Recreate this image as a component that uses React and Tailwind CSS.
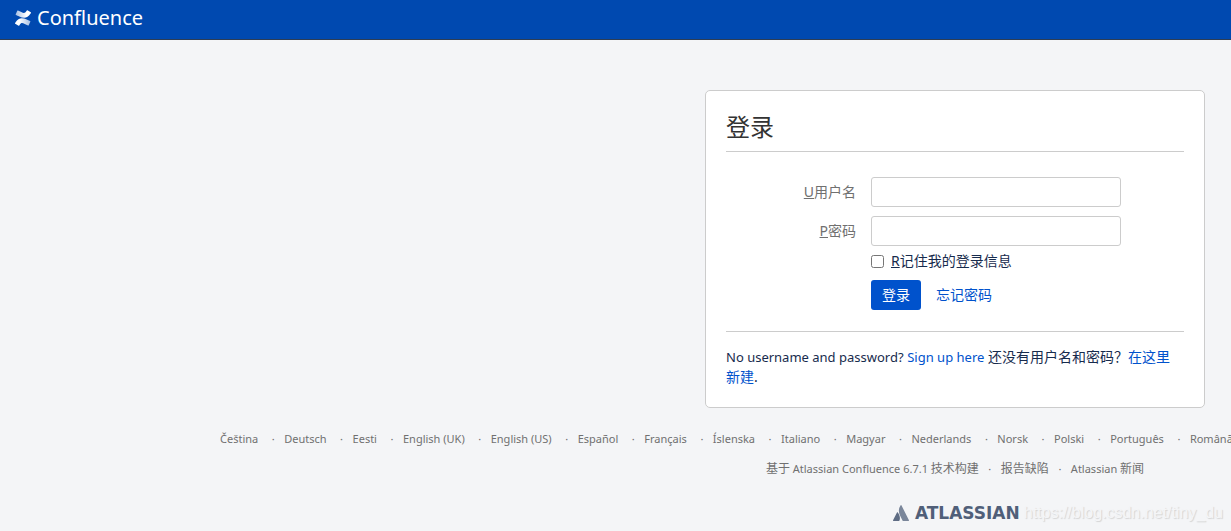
const languages = [
  "Čeština",
  "Deutsch",
  "Eesti",
  "English (UK)",
  "English (US)",
  "Español",
  "Français",
  "Íslenska",
  "Italiano",
  "Magyar",
  "Nederlands",
  "Norsk",
  "Polski",
  "Português",
  "Română"
];

function ConfluenceMark() {
  return (
    <svg viewBox="0 0 24 24" className="h-4 w-4" aria-hidden="true">
      <defs>
        <linearGradient id="markTop" x1="1" y1="0" x2="0" y2="0">
          <stop offset="0.3" stopColor="#fff" />
          <stop offset="1" stopColor="#fff" stopOpacity="0.65" />
        </linearGradient>
        <linearGradient id="markBottom" x1="0" y1="0" x2="1" y2="0">
          <stop offset="0.3" stopColor="#fff" />
          <stop offset="1" stopColor="#fff" stopOpacity="0.65" />
        </linearGradient>
      </defs>
      <path
        d="M.87 18.257c-.248.382-.53.875-.763 1.245a.764.764 0 0 0 .255 1.04l4.965 3.054a.764.764 0 0 0 1.058-.26c.199-.332.454-.763.733-1.221 1.967-3.247 3.945-2.853 7.508-1.146l4.957 2.337a.764.764 0 0 0 1.028-.382l2.364-5.346a.764.764 0 0 0-.382-1 599.851 599.851 0 0 1-4.965-2.361C10.911 10.97 5.224 11.185.87 18.257z"
        fill="url(#markBottom)"
      />
      <path
        d="M23.131 5.743c.249-.405.531-.875.764-1.25a.764.764 0 0 0-.256-1.034L18.675.404a.764.764 0 0 0-1.058.26c-.195.335-.451.763-.734 1.225-1.966 3.246-3.945 2.85-7.508 1.146L4.437.694a.764.764 0 0 0-1.027.382L1.046 6.422a.764.764 0 0 0 .382 1c1.039.49 3.105 1.467 4.965 2.361 6.698 3.246 12.392 3.029 16.738-4.04z"
        fill="url(#markTop)"
      />
    </svg>
  );
}

function AtlassianMark() {
  return (
    <svg viewBox="0 0 24 24" className="h-4 w-4" aria-hidden="true">
      <path
        d="M7.12 11.084a.683.683 0 0 0-1.16.126L.075 22.974a.703.703 0 0 0 .63 1.018h8.19a.678.678 0 0 0 .63-.39c1.767-3.65.696-9.203-2.406-12.52z"
        fill="#5e6c84"
      />
      <path
        d="M11.434.386a15.515 15.515 0 0 0-.906 15.317l3.95 7.9a.703.703 0 0 0 .628.388h8.19a.703.703 0 0 0 .63-1.017L12.63.38a.664.664 0 0 0-1.196.006z"
        fill="#7a869a"
      />
    </svg>
  );
}

function Field({ id, accessKey, label, type }) {
  return (
    <div className="flex items-center gap-[15px]">
      <label htmlFor={id} className="w-[130px] text-right text-[#707070]">
        <u>{accessKey}</u>
        {label}
      </label>
      <input
        id={id}
        type={type}
        accessKey={accessKey}
        className="h-[30px] w-[250px] rounded-[3px] border border-[#ccc] bg-white px-1"
      />
    </div>
  );
}

export default function App() {
  return (
    <div className="min-h-screen overflow-hidden bg-[#f4f5f7] font-['Noto_Sans','Noto_Sans_CJK_SC',sans-serif] text-sm leading-5 text-[#172b4d]">
      <header className="flex h-10 items-center border-b border-[#2e3d54] bg-[#0049b0] px-[15px]">
        <a href="#" className="flex items-center gap-[6px] pb-1 text-xl leading-7 text-white">
          <ConfluenceMark />
          Confluence
        </a>
      </header>

      <main className="mt-[50px] mr-[26px] ml-auto max-w-[500px] rounded-[5px] border border-[#ccc] bg-white p-5">
        <h1 className="border-b border-[#ccc] pt-[1px] pb-[9px] text-2xl leading-[30px] text-[#333]">登录</h1>

        <form className="mt-[25px]" onSubmit={(e) => e.preventDefault()}>
          <div className="flex flex-col gap-[9px]">
            <Field id="username" accessKey="U" label="用户名" type="text" />
            <Field id="password" accessKey="P" label="密码" type="password" />
          </div>
          <div className="mt-[5px] ml-[145px] flex items-center gap-[7px]">
            <input id="remember" type="checkbox" accessKey="R" className="h-[13px] w-[13px]" />
            <label htmlFor="remember">
              <u>R</u>记住我的登录信息
            </label>
          </div>
          <div className="mt-[9px] ml-[145px] flex items-center gap-[15px]">
            <button type="submit" className="h-[30px] w-[50px] rounded-[3px] bg-[#0052cc] text-white">
              登录
            </button>
            <a href="#" className="text-[#0052cc]">
              忘记密码
            </a>
          </div>
        </form>

        <p className="mt-[21px] border-t border-[#ccc] pt-[15px]">
          <span className="text-[13px]">No username and password?</span>{" "}
          <a href="#" className="text-[13px] text-[#0052cc]">
            Sign up here
          </a>{" "}
          还没有用户名和密码？
          <a href="#" className="text-[#0052cc]">
            在这里<span className="whitespace-nowrap">新建</span>
          </a>
          .
        </p>
      </main>

      <footer className="pt-[21px] text-[11px] text-[#707070]">
        <ul className="flex pl-[220px] whitespace-nowrap">
          {languages.map((name, i) => (
            <li key={name} className="flex">
              {i > 0 && <span className="w-[26px] pl-[4px] text-center">·</span>}
              <a href="#">{name}</a>
            </li>
          ))}
        </ul>
        <ul className="mt-[10px] mr-[26px] ml-auto flex max-w-[500px] justify-center whitespace-nowrap">
          <li>
            <span className="text-xs leading-5">基于</span> Atlassian Confluence 6.7.1{" "}
            <span className="text-xs leading-5">技术构建</span>
          </li>
          <li className="flex">
            <span className="w-[22px] text-center">·</span>
            <a href="#" className="text-xs leading-5">
              报告缺陷
            </a>
          </li>
          <li className="flex">
            <span className="w-[22px] text-center">·</span>
            <a href="#">
              Atlassian <span className="text-xs leading-5">新闻</span>
            </a>
          </li>
        </ul>
        <div className="mt-[24px] flex items-center justify-end gap-1 pr-2">
          <a
            href="#"
            className="flex items-center gap-[6px] font-['DejaVu_Sans',sans-serif] text-[17px] leading-5 font-bold text-[#505f79]"
          >
            <AtlassianMark />
            ATLASSIAN
          </a>
          <span className="font-['Liberation_Sans',sans-serif] text-base leading-5 text-[#f4f5f7] [text-shadow:1px_1px_1px_#d4d4d4]">
            https://blog.csdn.net/tiny_du
          </span>
        </div>
      </footer>
    </div>
  );
}
